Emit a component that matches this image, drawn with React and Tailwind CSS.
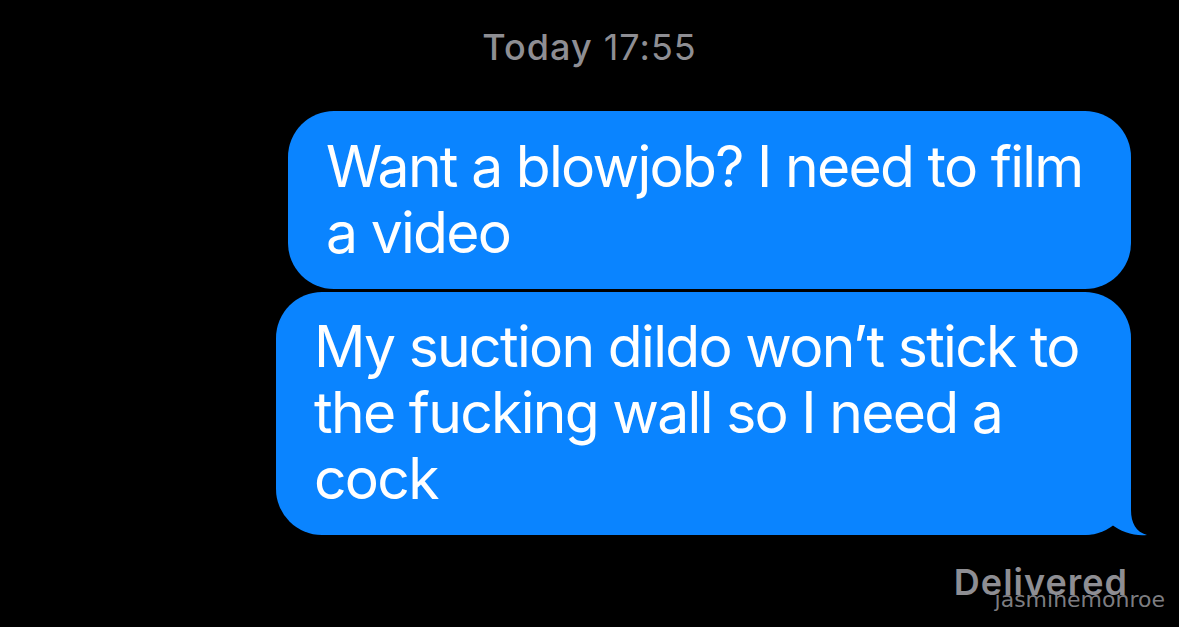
export default function App() {
  const font = { fontFamily: 'Inter, "Noto Sans", sans-serif' };
  return (
    <div className="w-[1179px] h-[627px] bg-black overflow-hidden relative" style={font}>
      <div className="flex flex-col">
        <div className="pt-[25px] h-[111px] text-center text-[36px] leading-[44px] tracking-[1px] text-[#8e8e93]">
          <span className="font-medium">Today</span> <span>17:55</span>
        </div>
        <div className="flex flex-col items-end pr-[48px] gap-[3px]">
          <div className="w-[843px] h-[178px] rounded-[46px] bg-[#0a84ff] pl-[38px] py-[23px] text-white text-[57px] leading-[66px] tracking-[-1.7px] whitespace-nowrap">
            Want a blowjob? I need to film<br />a video
          </div>
          <div className="relative w-[855px] h-[243px] rounded-[46px] bg-[#0a84ff] pl-[38px] py-[22px] text-white text-[57px] leading-[66px] tracking-[-1.7px] whitespace-nowrap">
            My suction dildo won’t stick to<br />the fucking wall so I need a<br />cock
            <svg className="absolute left-[804px] top-[198px]" width="70" height="47" viewBox="0 0 70 47">
              <path d="M0,0 L51,0 L51,20 C51,33 56,42 67,45 C55,46.5 41,42 31,34 C22,42 12,45 0,45 Z" fill="#0a84ff" />
            </svg>
          </div>
          <div className="mt-[22px] mr-[3px] text-[36px] leading-[44px] font-semibold tracking-[1px] text-[#8e8e93]">Delivered</div>
        </div>
      </div>
      <div
        className="absolute right-[14px] top-[587px] text-[22px] leading-[26px] text-[#8e8e93]/90"
        style={{ fontFamily: '"DejaVu Sans", sans-serif' }}
      >
        jasminemonroe
      </div>
    </div>
  );
}
